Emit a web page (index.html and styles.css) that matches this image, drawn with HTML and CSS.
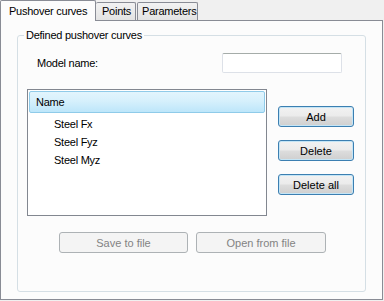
FILE: index.html
```html
<!DOCTYPE html>
<html lang="en">
  <head>
    <meta charset="UTF-8" />
    <title>Pushover curves</title>
    <link rel="stylesheet" href="styles.css">
  </head>
  <body>
    <div class="tabs">
      <div class="tab active">Pushover curves</div>
      <div class="tab">Points</div>
      <div class="tab">Parameters</div>
    </div>

    <div class="panel">
      <fieldset class="group">
        <legend>Defined pushover curves</legend>

        <div class="name-row">
          <label for="modelName">Model name:</label>
          <input type="text" id="modelName" class="text-input" />
        </div>

        <div class="list-area">
          <div class="list-box">
            <div class="list-header">Name</div>
            <ul class="curve-list">
              <li>Steel Fx</li>
              <li>Steel Fyz</li>
              <li>Steel Myz</li>
            </ul>
          </div>
          <div class="side-buttons">
            <button class="btn">Add</button>
            <button class="btn">Delete</button>
            <button class="btn">Delete all</button>
          </div>
        </div>

        <div class="file-row">
          <button class="btn file-btn save" disabled>Save to file</button>
          <button class="btn file-btn open" disabled>Open from file</button>
        </div>
      </fieldset>
    </div>
  </body>
</html>
```

FILE: styles.css
```css
body {
  margin: 0;
  width: 384px;
  height: 301px;
  background: #f0f0f0;
  font-family: "Liberation Sans", Arial, sans-serif;
  font-size: 11px;
  letter-spacing: -0.25px;
  color: #000;
}
.tabs {
  display: flex;
  align-items: flex-end;
  height: 20px;
}
.tab {
  box-sizing: border-box;
  height: 18px;
  line-height: 16px;
  padding: 0 4px 0 6px;
  border: 1px solid #898c95;
  border-bottom: none;
  border-left: none;
  background: linear-gradient(#f2f2f2, #e3e3e3);
  border-radius: 2px 2px 0 0;
}
.tab:nth-child(3) {
  border-left: 1px solid #898c95;
  margin-left: 1px;
  padding-left: 4px;
  padding-right: 1px;
}
.tab.active {
  position: relative;
  z-index: 1;
  height: 21px;
  width: 96px;
  margin-bottom: -1px;
  padding: 2px 0 0 8px;
  line-height: 16px;
  border-left: 1px solid #898c95;
  background: #fcfcfc;
}
.panel {
  box-sizing: border-box;
  width: 383px;
  height: 280px;
  border: 1px solid #898c95;
  background: #fcfcfc;
  padding: 8px 0 0 16px;
}
.group {
  box-sizing: border-box;
  width: 349px;
  height: 263px;
  margin: 0;
  padding: 0;
  border: 1px solid #d5dfe5;
  border-radius: 3px;
}
.group legend {
  margin-left: 6px;
  padding: 0 2px;
  line-height: 13px;
}
.name-row {
  display: flex;
  align-items: center;
  margin-top: 11px;
  height: 20px;
  padding-left: 19px;
}
.text-input {
  box-sizing: border-box;
  margin: 0 23px 0 auto;
  width: 120px;
  height: 20px;
  border: 1px solid #dde1e8;
  border-top-color: #a5aca9;
  border-radius: 2px;
  background: #fff;
  font: inherit;
}
.list-area {
  display: flex;
  margin-top: 16px;
}
.list-box {
  box-sizing: border-box;
  width: 240px;
  height: 127px;
  margin-left: 9px;
  border: 1px solid #828790;
  background: #fff;
  padding: 1px;
}
.list-header {
  box-sizing: border-box;
  height: 22px;
  line-height: 20px;
  padding-left: 6px;
  border: 1px solid #8fcbe9;
  border-radius: 2px;
  background: linear-gradient(#e2f5fd, #d6f0fc 45%, #bde6fa);
}
.curve-list {
  list-style: none;
  margin: 0;
  padding: 2px 0 0 25px;
}
.curve-list li {
  height: 18px;
  line-height: 18px;
}
.side-buttons {
  display: flex;
  flex-direction: column;
  gap: 13px;
  margin-left: 11px;
  padding-top: 17px;
}
.btn {
  box-sizing: border-box;
  width: 76px;
  height: 21px;
  padding: 0;
  border: 1px solid #3c7fb1;
  border-radius: 3px;
  box-shadow: inset 0 0 0 1px #c4e5f6;
  background: linear-gradient(#f2f2f2 0%, #ebebeb 48%, #dddddd 52%, #cfcfcf 100%);
  font: inherit;
  color: #000;
}
.file-row {
  display: flex;
  gap: 8px;
  margin-top: 16px;
  padding-left: 41px;
}
.btn.file-btn {
  height: 21px;
  border-color: #adb2b5;
  box-shadow: none;
  background: #f4f4f4;
  color: #838383;
}
.btn.save {
  width: 129px;
}
.btn.open {
  width: 130px;
}
```
